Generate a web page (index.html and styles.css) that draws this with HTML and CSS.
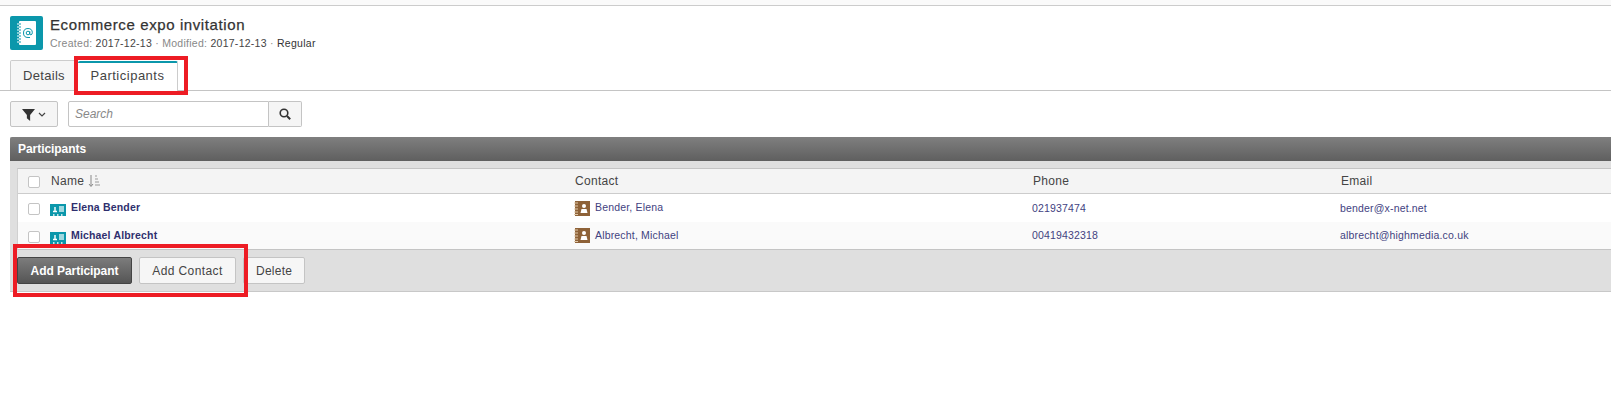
FILE: index.html
```html
<!DOCTYPE html>
<html lang="en">
<head>
<meta charset="utf-8">
<title>Ecommerce expo invitation</title>
<link rel="stylesheet" href="styles.css">
</head>
<body>
<div class="topband"></div>
<header class="head">
  <svg class="head-icon" viewBox="0 0 33 34"><rect width="33" height="34" rx="2" fill="#0b97ab"/><rect x="9" y="5" width="17" height="24" rx="1" fill="#fff"/><path d="M7 8h4M7 11h4M7 14h4M7 17h4M7 20h4M7 23h4M7 26h4" stroke="#fff" stroke-width="1"/><path d="M9 8h2M9 11h2M9 14h2M9 17h2M9 20h2M9 23h2M9 26h2" stroke="#0b97ab" stroke-width="1"/><circle cx="18" cy="17" r="1.8" fill="none" stroke="#0b97ab" stroke-width="1"/><path d="M19.8 15.2v2.6q0 1.2 1.2 1 1.3-.4 1.3-2 0-4.3-4.3-4.3-4.5 0-4.5 4.5t4.5 4.5h2" fill="none" stroke="#0b97ab" stroke-width="1"/></svg>
  <div class="head-text">
    <h1 class="title">Ecommerce expo invitation</h1>
    <div class="meta"><span class="dim">Created:</span> 2017-12-13 <span class="dim">· Modified:</span> 2017-12-13 <span class="dim">·</span> <span class="type">Regular</span></div>
  </div>
</header>
<nav class="tabs">
  <div class="tab">Details</div>
  <div class="tab active">Participants</div>
</nav>
<div class="toolbar">
  <button class="filter">
    <svg class="funnel" viewBox="0 0 12 12"><path d="M0 1h12L7.500 6.500V12L4.500 9.500V6.500z" fill="#333"/></svg>
    <svg class="caret" viewBox="0 0 8 5"><path d="M1 1l3 3 3-3" fill="none" stroke="#444" stroke-width="1.200"/></svg>
  </button>
  <div class="search">
    <div class="search-input">Search</div>
    <button class="search-btn"><svg class="glass" viewBox="0 0 12 12"><circle cx="5" cy="5" r="3.800" fill="none" stroke="#333" stroke-width="1.600"/><path d="M8 8l3.200 3.200" stroke="#333" stroke-width="2"/></svg></button>
  </div>
</div>
<section class="panel">
  <div class="panel-head">Participants</div>
  <div class="panel-body">
    <div class="grid">
      <div class="row row-head">
        <div class="c-check"><span class="box"></span></div>
        <div class="c-name">Name <svg class="sort" viewBox="0 0 12 14"><path d="M3 1v11M1 10l2 2.500L5 10" fill="none" stroke="#888" stroke-width="1"/><path d="M7 2h2M7 5h3M7 8h4M7 11h5" stroke="#999" stroke-width="1.200"/></svg></div>
        <div class="c-contact">Contact</div>
        <div class="c-phone">Phone</div>
        <div class="c-email">Email</div>
      </div>
      <div class="row">
        <div class="c-check"><span class="box"></span></div>
        <div class="c-name"><svg class="person" viewBox="0 0 16 13"><rect width="16" height="12" fill="#0b97ab"/><rect x="9" y="2" width="5" height="6" fill="#9fd8df"/><path d="M3 7.500h4M5 3v4" stroke="#fff" stroke-width="1.400"/><path d="M3 11h1.500M7 11h1.500M11 11h1.500" stroke="#fff" stroke-width="1.500"/></svg><b class="link">Elena Bender</b></div>
        <div class="c-contact"><svg class="book" viewBox="0 0 16 15"><rect x="1" width="15" height="15" fill="#8e6238"/><path d="M0 2h4M0 5h4M0 8h4M0 11h4M0 13.500h4" stroke="#e0c8a8" stroke-width="1"/><circle cx="10" cy="5" r="2" fill="#fff"/><path d="M6.500 12l1-4h5l1 4z" fill="#fff"/></svg><span class="link">Bender, Elena</span></div>
        <div class="c-phone link">021937474</div>
        <div class="c-email link">bender@x-net.net</div>
      </div>
      <div class="row row-alt">
        <div class="c-check"><span class="box"></span></div>
        <div class="c-name"><svg class="person" viewBox="0 0 16 13"><rect width="16" height="12" fill="#0b97ab"/><rect x="9" y="2" width="5" height="6" fill="#9fd8df"/><path d="M3 7.500h4M5 3v4" stroke="#fff" stroke-width="1.400"/><path d="M3 11h1.500M7 11h1.500M11 11h1.500" stroke="#fff" stroke-width="1.500"/></svg><b class="link">Michael Albrecht</b></div>
        <div class="c-contact"><svg class="book" viewBox="0 0 16 15"><rect x="1" width="15" height="15" fill="#8e6238"/><path d="M0 2h4M0 5h4M0 8h4M0 11h4M0 13.500h4" stroke="#e0c8a8" stroke-width="1"/><circle cx="10" cy="5" r="2" fill="#fff"/><path d="M6.500 12l1-4h5l1 4z" fill="#fff"/></svg><span class="link">Albrecht, Michael</span></div>
        <div class="c-phone link">00419432318</div>
        <div class="c-email link">albrecht@highmedia.co.uk</div>
      </div>
    </div>
    <div class="actions">
      <button class="btn btn-primary">Add Participant</button>
      <button class="btn btn-contact">Add Contact</button>
      <button class="btn">Delete</button>
    </div>
  </div>
</section>
<div class="mark mark-tab"></div>
<div class="mark mark-add"></div>
</body>
</html>
```
FILE: styles.css
```css
* { box-sizing: border-box; }
html, body { margin: 0; padding: 0; background: #fff; overflow: hidden; }
body { position: relative; height: 417px; font-family: "Liberation Sans", Arial, sans-serif; color: #333; }
button { font-family: inherit; margin: 0; cursor: pointer; }

.topband { height: 6px; background: #fafafa; border-bottom: 1px solid #ccc; }
.head { display: flex; gap: 7px; padding: 10px 10px 0; height: 54px; }
.head-icon { width: 33px; height: 34px; flex: none; }
.title { margin: 1px 0 0; font-size: 15px; line-height: 16px; font-weight: 400; letter-spacing: .6px; color: #333; -webkit-text-stroke: .25px #333; }
.meta { margin-top: 4px; font-size: 10.5px; line-height: 13px; color: #444; letter-spacing: .27px; white-space: nowrap; }
.dim { color: #888; }
.type { color: #333; }

.tabs { display: flex; padding-left: 10px; height: 31px; border-bottom: 1px solid #c4c4c4; }
.tab { width: 68px; height: 30px; text-align: center; line-height: 30px; font-size: 13px; letter-spacing: .3px; color: #444; background: #f6f6f6; border: 1px solid #ccc; border-bottom: 0; border-radius: 2px 2px 0 0; }
.tab.active { width: 100px; height: 30px; margin-top: 1px; line-height: 26px; letter-spacing: .5px; color: #444; background: #fff; border-top: 2px solid #0b97ab; border-left: 0; }

.toolbar { display: flex; gap: 10px; padding: 10px 10px 0; height: 46px; }
.filter { width: 48px; height: 26px; padding: 0; display: flex; align-items: center; justify-content: center; gap: 3px; background: #f5f5f5; border: 1px solid #c4c4c4; border-radius: 2px; }
.funnel { width: 13px; height: 13px; }
.caret { width: 8px; height: 5px; }
.search { display: flex; width: 234px; height: 26px; }
.search-input { flex: 1; padding-left: 6px; line-height: 24px; font-size: 12px; font-style: italic; color: #888; background: #fff; border: 1px solid #c4c4c4; border-radius: 2px 0 0 2px; }
.search-btn { width: 33px; padding: 0; display: flex; align-items: center; justify-content: center; background: #f5f5f5; border: 1px solid #c4c4c4; border-left: 0; border-radius: 0 2px 2px 0; }
.glass { width: 12px; height: 12px; }

.panel { margin-left: 10px; height: 155px; border-bottom: 1px solid #c8c8c8; background: #dfdfdf; }
.panel-head { height: 24px; padding-left: 8px; line-height: 24px; font-size: 12px; font-weight: 700; letter-spacing: -.05px; color: #fff; background: linear-gradient(#7f7f7f, #5f5f5f); border-radius: 2px 0 0 0; }
.panel-body { padding: 7px 0 0 7px; }
.grid { background: #fff; border-top: 1px solid #c4c4c4; border-left: 1px solid #d0d0d0; border-bottom: 1px solid #c4c4c4; }
.row { display: grid; grid-template-columns: 33px 524px 458px 308px 1fr; align-items: center; height: 28px; font-size: 10.5px; letter-spacing: .17px; }
.row-head { height: 25px; font-size: 12px; letter-spacing: .3px; color: #444; background: #f4f4f4; border-bottom: 1px solid #ccc; }
.row-alt { height: 27px; background: #fafafa; overflow: hidden; }
.c-check { padding: 2px 0 0 10px; display: flex; align-items: center; }
.box { width: 12px; height: 12px; background: #fff; border: 1px solid #c4c4c4; border-radius: 2px; }
.c-name, .c-contact { display: flex; align-items: center; white-space: nowrap; }
.c-name { gap: 5px; }
.c-contact { gap: 5px; }
.row:not(.row-head) .c-name { margin-left: -1px; }
.row:not(.row-head) .c-contact, .row:not(.row-head) .c-phone { margin-left: -1px; }
.row:not(.row-head) .c-phone, .row:not(.row-head) .c-email { padding-bottom: 1px; }
.row:not(.row-head) .c-email { margin-left: -1px; }
.sort { width: 12px; height: 14px; margin-left: -1px; }
.person { width: 16px; height: 13px; margin-top: 5px; flex: none; }
.book { width: 16px; height: 15px; flex: none; }
.link { color: #42427f; }
.c-contact .link { position: relative; top: -1px; }
b.link { font-weight: 700; position: relative; top: -1px; color: #2f2f6e; }

.actions { display: flex; gap: 7px; align-items: center; padding-top: 7px; }
.btn { height: 27px; padding: 0 12px; font-size: 12px; letter-spacing: .25px; color: #444; background: #f6f6f6; border: 1px solid #c4c4c4; border-radius: 2px; }
.btn-contact { width: 97px; padding: 0; letter-spacing: .4px; }
.btn-primary { width: 115px; padding: 0; font-weight: 700; letter-spacing: -.05px; color: #fff; background: linear-gradient(#7c7c7c, #555); border-color: #444; }

.mark { position: absolute; border: 4px solid #ed1c24; pointer-events: none; }
.mark-tab { left: 74px; top: 56px; width: 114px; height: 39px; }
.mark-add { left: 13px; top: 244px; width: 235px; height: 53px; }
```
